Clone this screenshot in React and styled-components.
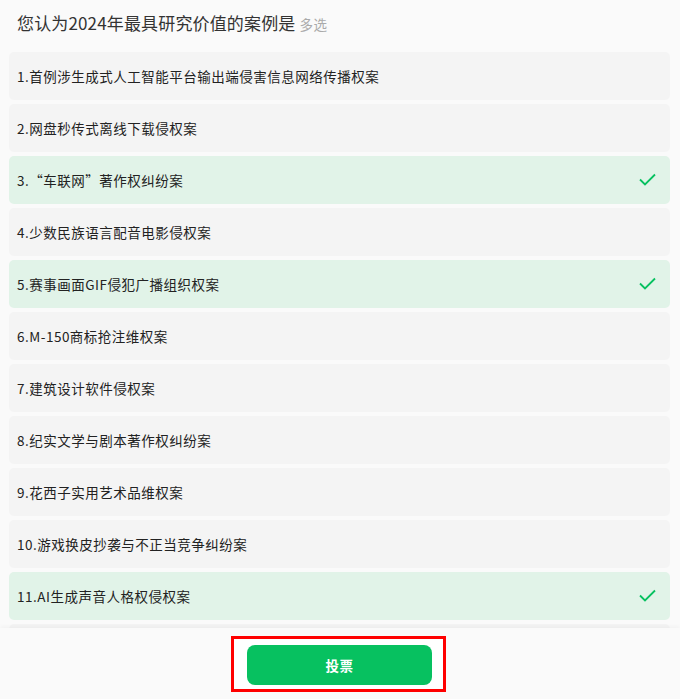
import React from "react";
import styled, { createGlobalStyle } from "styled-components";

const GlobalStyle = createGlobalStyle`
  html, body {
    margin: 0;
    padding: 0;
    background: #fafafa;
  }
  body {
    font-family: "Noto Sans CJK SC", "Noto Sans", sans-serif;
  }
`;

const Page = styled.div`
  display: flex;
  flex-direction: column;
  width: 680px;
  height: 699px;
  background: #fafafa;
  overflow: hidden;
`;

const Header = styled.div`
  display: flex;
  align-items: baseline;
  gap: 4px;
  height: 52px;
  box-sizing: border-box;
  padding: 11px 0 0 17px;
`;

const Title = styled.span`
  font-size: 17px;
  letter-spacing: 0.15px;
  color: #333;
  line-height: 24px;
`;

const Hint = styled.span`
  font-size: 13.5px;
  letter-spacing: 0.5px;
  color: #aaa;
`;

const List = styled.div`
  flex: 1;
  display: flex;
  flex-direction: column;
  gap: 4px;
  padding: 0 10px 0 9px;
  overflow: hidden;
`;

const Option = styled.div`
  flex: 0 0 48px;
  display: flex;
  align-items: center;
  justify-content: space-between;
  box-sizing: border-box;
  padding: 0 14px 1px 8px;
  border-radius: 5px;
  background: ${(p) => (p.$selected ? "#e1f3e8" : "#f4f4f4")};
  font-size: 13.5px;
  letter-spacing: 0.5px;
  color: #222;
`;

const Check = styled.svg`
  width: 17px;
  height: 13px;
  flex-shrink: 0;
`;

const Footer = styled.div`
  flex: 0 0 71px;
  display: flex;
  justify-content: center;
  align-items: flex-start;
  padding-top: 8px;
  box-sizing: border-box;
  background: #fafafa;
  box-shadow: 0 -2px 4px rgba(0, 0, 0, 0.03);
`;

const Highlight = styled.div`
  border: 3px solid #ff0000;
  padding: 6px 11px 4px 13px;
  background: #fff;
  margin-left: -3px;
`;

const VoteButton = styled.button`
  width: 185px;
  height: 40px;
  border: none;
  border-radius: 8px;
  background: #07c160;
  color: #fff;
  font-family: "Noto Sans CJK SC", sans-serif;
  font-size: 13.5px;
  font-weight: 600;
  letter-spacing: 0.5px;
  cursor: pointer;
`;

const options = [
  { label: "1.首例涉生成式人工智能平台输出端侵害信息网络传播权案" },
  { label: "2.网盘秒传式离线下载侵权案" },
  { label: "3.\u201C车联网\u201D著作权纠纷案", selected: true },
  { label: "4.少数民族语言配音电影侵权案" },
  { label: "5.赛事画面GIF侵犯广播组织权案", selected: true },
  { label: "6.M-150商标抢注维权案" },
  { label: "7.建筑设计软件侵权案" },
  { label: "8.纪实文学与剧本著作权纠纷案" },
  { label: "9.花西子实用艺术品维权案" },
  { label: "10.游戏换皮抄袭与不正当竞争纠纷案" },
  { label: "11.AI生成声音人格权侵权案", selected: true },
  { label: "" },
];

export default function App() {
  return (
    <>
      <GlobalStyle />
      <Page>
        <Header>
          <Title>您认为2024年最具研究价值的案例是</Title>
          <Hint>多选</Hint>
        </Header>
        <List>
          {options.map((o, i) => (
            <Option key={i} $selected={o.selected}>
              <span>{o.label}</span>
              {o.selected && (
                <Check viewBox="0 0 17 13">
                  <path
                    d="M1 6.5 L6 11.5 L16 1.5"
                    fill="none"
                    stroke="#07c160"
                    strokeWidth="1.8"
                  />
                </Check>
              )}
            </Option>
          ))}
        </List>
        <Footer>
          <Highlight>
            <VoteButton>投票</VoteButton>
          </Highlight>
        </Footer>
      </Page>
    </>
  );
}
